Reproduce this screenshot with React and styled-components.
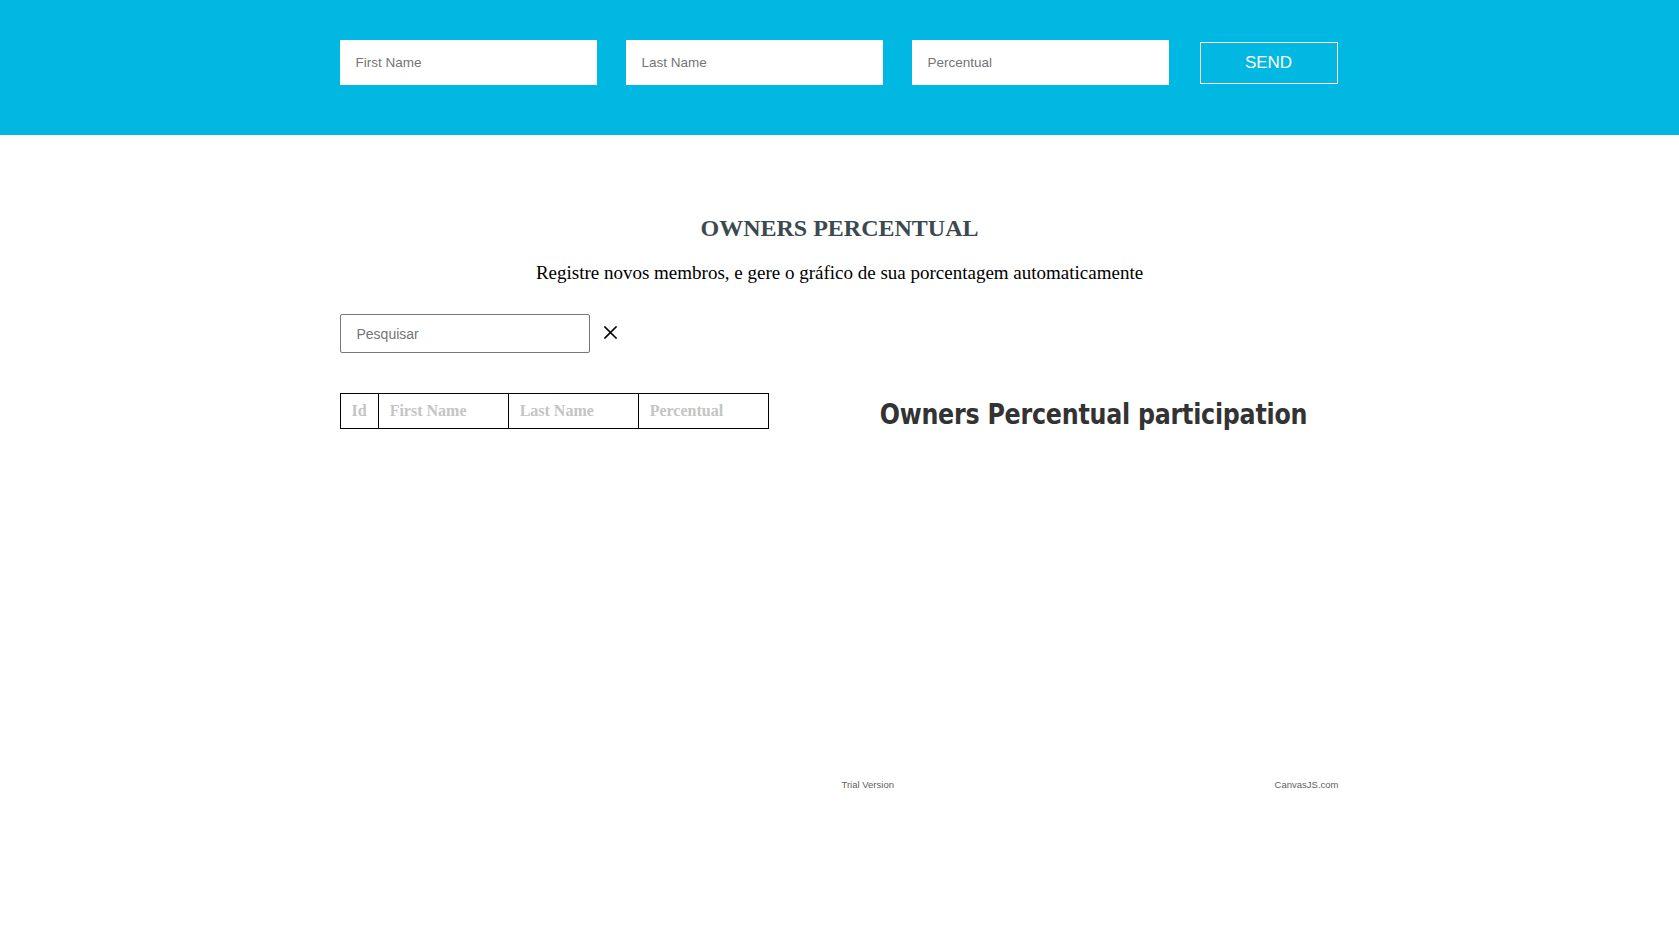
import React, { useState } from 'react';
import styled, { createGlobalStyle } from 'styled-components';

const GlobalStyle = createGlobalStyle`
  * { box-sizing: border-box; }
  body {
    margin: 0;
    background: #fff;
    font-family: "Liberation Serif", "Times New Roman", serif;
  }
`;

const Header = styled.header`
  background: #00b8e2;
  padding: 40px 0 50px;
`;

const Wrap = styled.div`
  width: 1000px;
  margin: 0 auto;
`;

const Form = styled.form`
  width: 1000px;
  margin: 0 auto;
  display: flex;
  align-items: center;
  gap: 29px;
`;

const Field = styled.input`
  width: 257px;
  height: 45px;
  border: none;
  padding: 0 16px;
  font-family: "Liberation Sans", Arial, sans-serif;
  font-size: 13.5px;
  color: #333;
  outline: none;

  &::placeholder {
    color: #757575;
  }
`;

const SendBtn = styled.button`
  width: 138px;
  height: 42px;
  margin-left: 2px;
  background: transparent;
  border: 1.5px solid #fff;
  color: #fff;
  font-family: "Liberation Sans", Arial, sans-serif;
  font-size: 17px;
  cursor: pointer;
`;

const Title = styled.h2`
  margin: 79px 0 0;
  text-align: center;
  font-size: 24px;
  line-height: 28px;
  font-weight: bold;
  color: #3c4a4f;
`;

const Subtitle = styled.p`
  margin: 20px 0 0;
  text-align: center;
  font-size: 19px;
  line-height: 22px;
  color: #000;
`;

const SearchRow = styled.div`
  margin-top: 30px;
  display: flex;
  align-items: center;
  gap: 14px;
`;

const SearchInput = styled.input`
  width: 250px;
  height: 39px;
  border: 1px solid #767676;
  border-radius: 2px;
  padding: 0 16px;
  font-family: "Liberation Sans", Arial, sans-serif;
  font-size: 14px;
  outline: none;

  &::placeholder {
    color: #757575;
  }
`;

const ClearBtn = styled.button`
  width: 13px;
  height: 13px;
  margin-top: -2px;
  padding: 0;
  border: none;
  background: none;
  display: flex;
  cursor: pointer;

  svg {
    width: 13px;
    height: 13px;
  }
`;

const Content = styled.div`
  margin-top: 40px;
  display: flex;
  justify-content: space-between;
  align-items: flex-start;
`;

const Table = styled.table`
  border-collapse: collapse;
`;

const Th = styled.th`
  height: 35px;
  padding: 0 11px;
  border: 1px solid #000;
  text-align: left;
  font-size: 16px;
  font-weight: bold;
  color: #c4c4c4;
  width: ${({ $w }) => ($w ? `${$w}px` : 'auto')};
`;

const Chart = styled.div`
  width: 498px;
  height: 403px;
  display: flex;
  flex-direction: column;
  justify-content: space-between;
`;

const ChartTitle = styled.div`
  padding: 4px 7px 0 0;
  text-align: center;
  white-space: nowrap;
  font-family: Impact, "DejaVu Sans", sans-serif;
  font-weight: bold;
  font-size: 28px;
  line-height: 36px;
  letter-spacing: -0.3px;
  color: #333;

  span {
    display: inline-block;
    transform: scaleX(0.85);
  }
`;

const Credits = styled.div`
  display: flex;
  justify-content: space-between;
  padding: 0 1px 6px 0;
  font-family: "Liberation Sans", Arial, sans-serif;
  font-size: 9.5px;
  color: #606060;
`;

const columns = [
  { label: 'Id' },
  { label: 'First Name', w: 130 },
  { label: 'Last Name', w: 130 },
  { label: 'Percentual', w: 130 },
];

export default function App() {
  const [search, setSearch] = useState('');

  return (
    <>
      <GlobalStyle />
      <Header>
        <Form onSubmit={e => e.preventDefault()}>
          <Field placeholder="First Name" />
          <Field placeholder="Last Name" />
          <Field placeholder="Percentual" />
          <SendBtn type="submit">SEND</SendBtn>
        </Form>
      </Header>

      <Wrap>
        <Title>OWNERS PERCENTUAL</Title>
        <Subtitle>Registre novos membros, e gere o gráfico de sua porcentagem automaticamente</Subtitle>

        <SearchRow>
          <SearchInput
            placeholder="Pesquisar"
            value={search}
            onChange={e => setSearch(e.target.value)}
          />
          <ClearBtn type="button" onClick={() => setSearch('')}>
            <svg viewBox="0 0 13 13" fill="none" stroke="#000" strokeWidth="1.6" strokeLinecap="square">
              <path d="M1 1 12 12M12 1 1 12" />
            </svg>
          </ClearBtn>
        </SearchRow>

        <Content>
          <Table>
            <thead>
              <tr>
                {columns.map(c => (
                  <Th key={c.label} $w={c.w}>{c.label}</Th>
                ))}
              </tr>
            </thead>
            <tbody />
          </Table>

          <Chart>
            <ChartTitle>
              <span>Owners Percentual participation</span>
            </ChartTitle>
            <Credits>
              <span>Trial Version</span>
              <span>CanvasJS.com</span>
            </Credits>
          </Chart>
        </Content>
      </Wrap>
    </>
  );
}
